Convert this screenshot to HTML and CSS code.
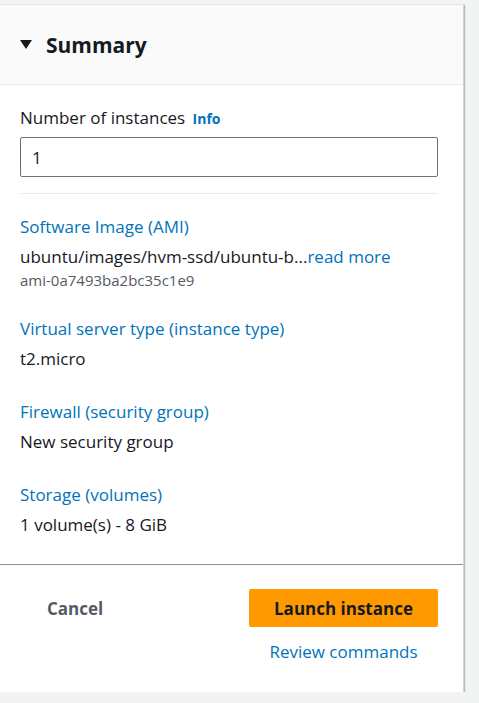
FILE: index.html
```html
<!DOCTYPE html>
<html>
<head>
<meta charset="utf-8">
<link rel="stylesheet" href="styles.css">
</head>
<body>
<div class="page">
  <section class="card">
    <header class="card-header">
      <span class="caret"></span>
      <h2 class="title">Summary</h2>
    </header>
    <div class="card-body">
      <div class="field">
        <div class="field-label">Number of instances <a class="info">Info</a></div>
        <div class="input">1</div>
      </div>
      <hr class="divider">
      <div class="group">
        <a class="group-label">Software Image (AMI)</a>
        <div class="group-value">ubuntu/images/hvm-ssd/ubuntu-b...<a class="more">read more</a></div>
        <div class="group-sub">ami-0a7493ba2bc35c1e9</div>
      </div>
      <div class="group">
        <a class="group-label">Virtual server type (instance type)</a>
        <div class="group-value">t2.micro</div>
      </div>
      <div class="group">
        <a class="group-label">Firewall (security group)</a>
        <div class="group-value">New security group</div>
      </div>
      <div class="group last">
        <a class="group-label">Storage (volumes)</a>
        <div class="group-value">1 volume(s) - 8 GiB</div>
      </div>
    </div>
    <footer class="card-footer">
      <button class="btn-cancel">Cancel</button>
      <div class="actions">
        <button class="btn-primary">Launch instance</button>
        <a class="review">Review commands</a>
      </div>
    </footer>
  </section>
</div>
</body>
</html>
```
FILE: styles.css
```css
* { box-sizing: border-box; }
html, body {
  margin: 0;
  padding: 0;
  background: #f2f3f3;
  font-family: "Open Sans", "Noto Sans", sans-serif;
  color: #16191f;
}
.page {
  padding-top: 4px;
  width: 465px;
}
.card {
  background: #ffffff;
  border-top: 1px solid #e4e7e7;
  border-right: 1px solid #d0d4d6;
  box-shadow: 1px 1px 1px rgba(0,28,36,0.25);
  width: 464px;
  display: flex;
  flex-direction: column;
}
.card-header {
  height: 80px;
  flex: none;
  background: #fafafa;
  border-bottom: 1px solid #eaeded;
  display: flex;
  align-items: center;
  padding-left: 20px;
  gap: 14px;
}
.caret {
  width: 0;
  height: 0;
  border-left: 6px solid transparent;
  border-right: 6px solid transparent;
  border-top: 9px solid #16191f;
}
.title {
  margin: 0;
  font-size: 21px;
  font-weight: 700;
  color: #16191f;
}
.card-body {
  padding: 22px 25px 0 20px;
}
.field-label {
  font-size: 17px;
  line-height: 22px;
}
.info {
  font-size: 14px;
  font-weight: 700;
  color: #0073bb;
  margin-left: 3px;
}
.input {
  margin-top: 7px;
  height: 40px;
  border: 1px solid #687078;
  border-radius: 2px;
  font-size: 17px;
  padding: 0 11px;
  display: flex;
  align-items: center;
}
.divider {
  border: 0;
  border-top: 1px solid #eaeded;
  margin: 16px 0 22px 0;
}
.group {
  display: flex;
  flex-direction: column;
  margin-bottom: 31px;
}
.group.last {
  margin-bottom: 28px;
}
.group-label {
  color: #0073bb;
  font-size: 17px;
  line-height: 22px;
}
.group-value {
  margin-top: 8px;
  font-size: 17px;
  line-height: 22px;
}
.more { color: #0073bb; }
.group-sub {
  font-size: 15px;
  line-height: 20px;
  color: #545b64;
  margin-top: 2px;
  margin-bottom: -3px;
}
.card-footer {
  flex: none;
  border-top: 1px solid #879596;
  height: 128px;
  display: flex;
  justify-content: space-between;
  padding: 24px 25px 0 27px;
}
.btn-cancel {
  background: none;
  border: 0;
  font-family: inherit;
  font-size: 17px;
  font-weight: 700;
  color: #545b64;
  height: 38px;
  padding: 0 20px;
}
.actions {
  display: flex;
  flex-direction: column;
  align-items: center;
  gap: 14px;
}
.btn-primary {
  width: 189px;
  height: 38px;
  background: #ff9900;
  border: 0;
  border-radius: 2px;
  font-family: inherit;
  font-size: 17px;
  font-weight: 700;
  color: #16191f;
}
.review {
  color: #0073bb;
  font-size: 17px;
  line-height: 22px;
}
```
